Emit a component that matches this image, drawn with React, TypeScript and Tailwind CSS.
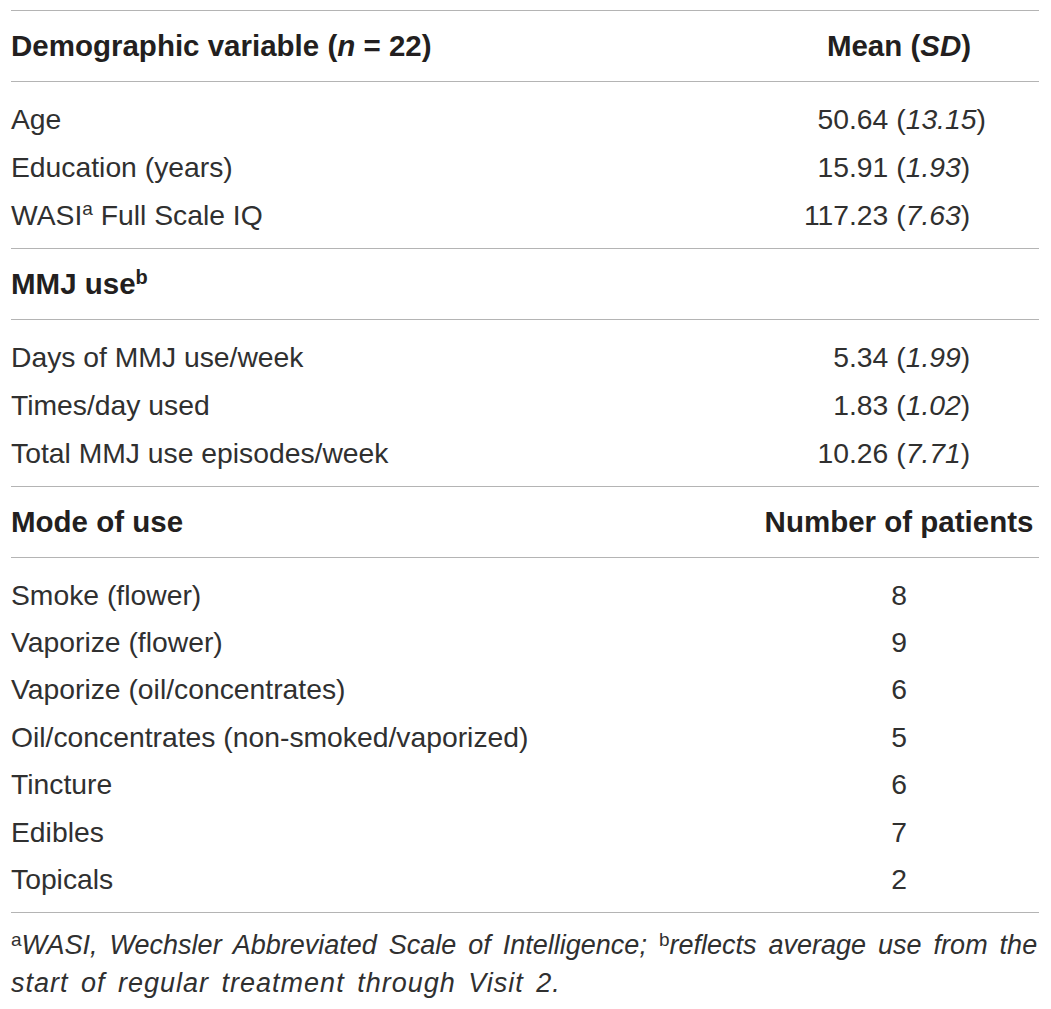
import React from 'react';

const demographics = [
  { label: <>Age</>, int: '50', rest: '.64', sd: '13.15' },
  { label: <>Education (years)</>, int: '15', rest: '.91', sd: '1.93' },
  { label: <>WASI<sup className="text-[19px] top-[-10px]">a</sup> Full Scale IQ</>, int: '117', rest: '.23', sd: '7.63' },
];

const mmj = [
  { label: 'Days of MMJ use/week', int: '5', rest: '.34', sd: '1.99' },
  { label: 'Times/day used', int: '1', rest: '.83', sd: '1.02' },
  { label: 'Total MMJ use episodes/week', int: '10', rest: '.26', sd: '7.71' },
];

const modes = [
  { label: 'Smoke (flower)', n: 8 },
  { label: 'Vaporize (flower)', n: 9 },
  { label: 'Vaporize (oil/concentrates)', n: 6 },
  { label: 'Oil/concentrates (non-smoked/vaporized)', n: 5 },
  { label: 'Tincture', n: 6 },
  { label: 'Edibles', n: 7 },
  { label: 'Topicals', n: 2 },
];

const Rule = () => <div className="h-px bg-[#b4b4b4]" />;

const HeaderRow = ({ left, right }: { left: React.ReactNode; right?: React.ReactNode }) => (
  <div className="flex items-center h-[70px] font-bold text-[#231f20] text-[29.5px]">
    <div className="flex-1">{left}</div>
    <div className="w-[280px] text-center">{right}</div>
  </div>
);

const MeanRow = ({ label, int, rest, sd }: { label: React.ReactNode; int: string; rest: string; sd: string }) => (
  <div className="flex h-[48px] items-center">
    <div className="flex-1">{label}</div>
    <div className="w-[280px] flex">
      <span className="w-[90px] text-right">{int}</span>
      <span>
        {rest} (<i>{sd}</i>)
      </span>
    </div>
  </div>
);

const App = () => {
  return (
    <div className="bg-white w-[1051px] h-[1009px] pt-[10px] pl-[11px] pr-[12px] font-['Liberation_Sans',Arial,sans-serif] text-[#303030] text-[28.3px] leading-none">
      <Rule />
      <HeaderRow
        left={<>Demographic variable (<i>n</i> = 22)</>}
        right={<>Mean (<i>SD</i>)</>}
      />
      <Rule />
      <div className="pt-[13px] pb-[9px]">
        {demographics.map((r, i) => (
          <MeanRow key={i} {...r} />
        ))}
      </div>
      <Rule />
      <HeaderRow left={<>MMJ use<sup className="text-[20px] top-[-10px]">b</sup></>} />
      <Rule />
      <div className="pt-[13px] pb-[9px]">
        {mmj.map((r, i) => (
          <MeanRow key={i} {...r} />
        ))}
      </div>
      <Rule />
      <HeaderRow left="Mode of use" right="Number of patients" />
      <Rule />
      <div className="pt-[13px] pb-[9px]">
        {modes.map((m) => (
          <div key={m.label} className="flex h-[47.4px] items-center">
            <div className="flex-1">{m.label}</div>
            <div className="w-[280px] text-center">{m.n}</div>
          </div>
        ))}
      </div>
      <Rule />
      <div className="pt-[13px] text-[27px] leading-[38px] italic whitespace-nowrap">
        <p className="[word-spacing:4.5px]">
          <sup className="not-italic text-[19px] top-[-8px]">a</sup>WASI, Wechsler Abbreviated Scale of Intelligence;{' '}
          <sup className="not-italic text-[19px] top-[-8px]">b</sup>reflects average use from the
        </p>
        <p className="tracking-[1px] [word-spacing:4px]">start of regular treatment through Visit 2.</p>
      </div>
    </div>
  );
};

export default App;
